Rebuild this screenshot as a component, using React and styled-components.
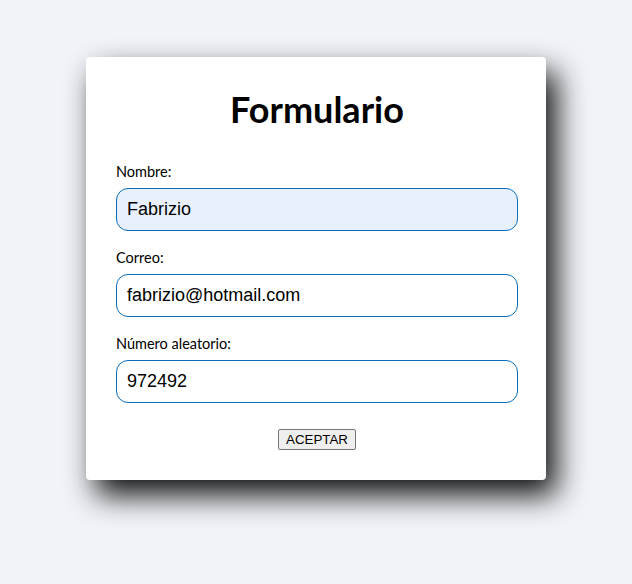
import styled, { createGlobalStyle } from "styled-components";
import { useState } from "react";

const GlobalStyle = createGlobalStyle`
  body {
    margin: 0;
    background-color: #f0f4f8;
    font-family: Lato, "Noto Sans", sans-serif;
  }
`;

const App = () => {
  const [form, setForm] = useState({
    nombre: "Fabrizio",
    correo: "fabrizio@hotmail.com",
    numero: "972492",
  });

  const handleChange = (e) => {
    setForm({ ...form, [e.target.name]: e.target.value });
  };

  return (
    <Page>
      <GlobalStyle />
      <Card>
        <Title>Formulario</Title>
        <Field>
          <Label htmlFor="nombre">Nombre:</Label>
          <Input
            id="nombre"
            name="nombre"
            value={form.nombre}
            onChange={handleChange}
            $filled
          />
        </Field>
        <Field>
          <Label htmlFor="correo">Correo:</Label>
          <Input
            id="correo"
            name="correo"
            value={form.correo}
            onChange={handleChange}
          />
        </Field>
        <Field>
          <Label htmlFor="numero">Número aleatorio:</Label>
          <Input
            id="numero"
            name="numero"
            value={form.numero}
            onChange={handleChange}
          />
        </Field>
        <Actions>
          <Button>ACEPTAR</Button>
        </Actions>
      </Card>
    </Page>
  );
};

export default App;

const Page = styled.div`
  min-height: 584px;
  padding-top: 57px;
  box-sizing: border-box;
  display: flex;
  justify-content: center;
  align-items: flex-start;
`;

const Card = styled.div`
  width: 460px;
  box-sizing: border-box;
  padding: 30px 28px 30px 30px;
  background-color: #ffffff;
  border-radius: 4px;
  box-shadow: 10px 15px 30px rgba(0, 0, 0, 0.95);
`;

const Title = styled.h1`
  margin: 0 0 32px 0;
  font-size: 36px;
  line-height: 44px;
  font-weight: 700;
  text-align: center;
  color: #000;
`;

const Field = styled.div`
  margin-bottom: 18px;
`;

const Label = styled.label`
  display: block;
  margin-bottom: 8px;
  font-size: 14.5px;
  line-height: 17px;
  color: #000;
`;

const Input = styled.input`
  display: block;
  width: 100%;
  height: 43px;
  box-sizing: border-box;
  padding: 0 10px;
  border: 1px solid #0a6ebd;
  border-radius: 12px;
  background-color: ${(p) => (p.$filled ? "#e8f0fe" : "#ffffff")};
  font-family: "Liberation Sans", Arial, sans-serif;
  font-size: 18px;
  color: #000;
  outline: none;
`;

const Actions = styled.div`
  display: flex;
  justify-content: center;
  margin-top: 26px;
`;

const Button = styled.button`
  padding: 1px 7px;
  font-family: "Liberation Sans", Arial, sans-serif;
  font-size: 13.33px;
  line-height: 17px;
  color: #000;
  background-color: #efefef;
  border: 1px solid #767676;
  border-radius: 2px;
  cursor: pointer;
`;
